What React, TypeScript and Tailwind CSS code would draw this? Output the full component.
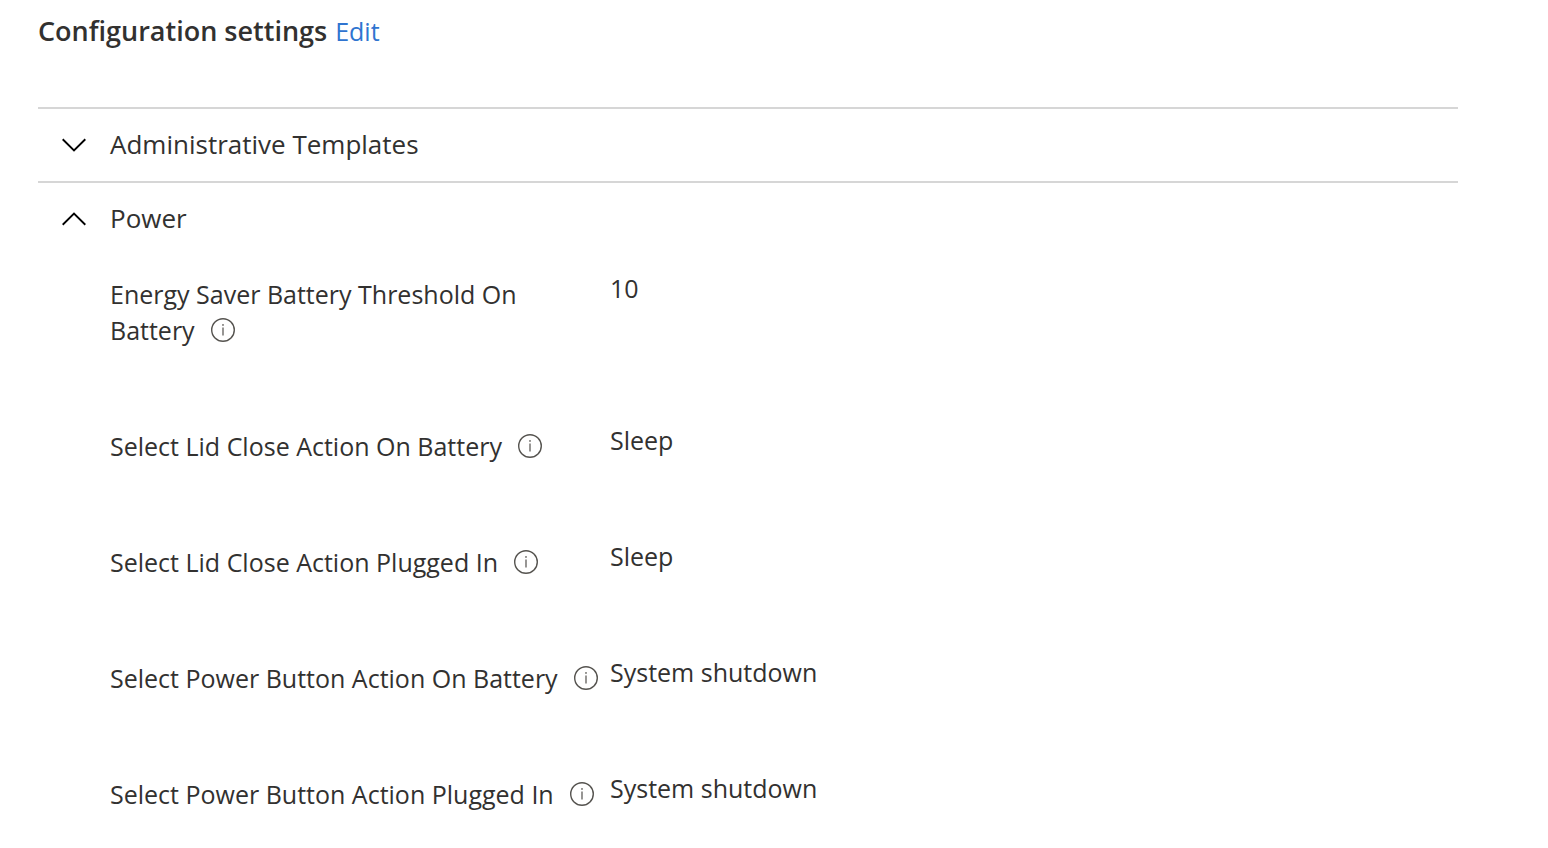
import { useState } from "react";

type Setting = { label: string; value: string };

const powerSettings: Setting[] = [
  { label: "Energy Saver Battery Threshold On Battery", value: "10" },
  { label: "Select Lid Close Action On Battery", value: "Sleep" },
  { label: "Select Lid Close Action Plugged In", value: "Sleep" },
  { label: "Select Power Button Action On Battery", value: "System shutdown" },
  { label: "Select Power Button Action Plugged In", value: "System shutdown" },
];

function Chevron({ open }: { open: boolean }) {
  return (
    <svg width="24" height="14" viewBox="0 0 24 14" fill="none" stroke="#000000" strokeWidth="1.9" aria-hidden="true">
      <path d={open ? "M0.7 12.7 12 1.6 23.3 12.7" : "M0.7 1.3 12 12.4 23.3 1.3"} />
    </svg>
  );
}

function InfoIcon() {
  return (
    <svg width="24" height="24" viewBox="0 0 24 24" fill="none" aria-hidden="true">
      <circle cx="12" cy="12" r="11.3" stroke="#55534f" strokeWidth="1.4" />
      <path d="M12 9.6v8" stroke="#6b6966" strokeWidth="1.4" />
      <circle cx="12" cy="6.9" r="0.95" fill="#6b6966" />
    </svg>
  );
}

function SettingRow({ label, value }: Setting) {
  const words = label.split(" ");
  const last = words.pop();
  return (
    <div className="flex">
      <dt className="w-[500px] shrink-0 pt-1.5 leading-9">
        {words.join(" ")}{" "}
        <span className="inline-flex items-center gap-4 align-top whitespace-nowrap">
          {last}
          <button type="button" aria-label={"About " + label}>
            <InfoIcon />
          </button>
        </span>
      </dt>
      <dd className="leading-9">{value}</dd>
    </div>
  );
}

function Section({ title, settings, initiallyOpen }: { title: string; settings: Setting[]; initiallyOpen: boolean }) {
  const [open, setOpen] = useState(initiallyOpen);
  return (
    <section className="border-t-2 border-[#d6d6d6]">
      <h2>
        <button
          type="button"
          aria-expanded={open}
          onClick={() => setOpen(!open)}
          className="flex h-[72px] w-full items-center gap-6 pl-6 text-left text-[26px]"
        >
          <Chevron open={open} />
          <span className="pb-0.5">{title}</span>
        </button>
      </h2>
      {open && (
        <dl className="flex flex-col gap-[74px] pt-[15px] pl-[72px] text-[25px]">
          {settings.map((s) => (
            <SettingRow key={s.label} label={s.label} value={s.value} />
          ))}
        </dl>
      )}
    </section>
  );
}

export default function App() {
  return (
    <main className="bg-white pt-[11px] pr-[90px] pb-6 pl-[38px] font-['Segoe_UI','Open_Sans','Noto_Sans',sans-serif] text-[#323130]">
      <header className="flex items-center gap-2 pb-14 leading-10">
        <h1 className="text-[27px] font-semibold">Configuration settings</h1>
        <a href="#edit" className="text-[25px] text-[#2f74d0]">
          Edit
        </a>
      </header>
      <Section title="Administrative Templates" settings={[]} initiallyOpen={false} />
      <Section title="Power" settings={powerSettings} initiallyOpen={true} />
    </main>
  );
}
